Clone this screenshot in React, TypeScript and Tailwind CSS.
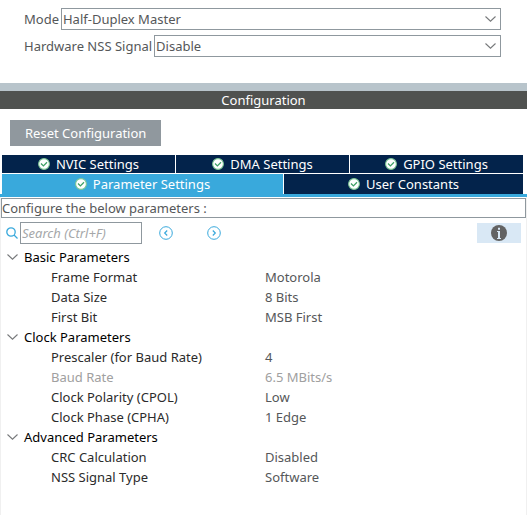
import { useState } from "react";

type Param = { name: string; value: string; disabled?: boolean };
type Group = { title: string; params: Param[] };

const groups: Group[] = [
  {
    title: "Basic Parameters",
    params: [
      { name: "Frame Format", value: "Motorola" },
      { name: "Data Size", value: "8 Bits" },
      { name: "First Bit", value: "MSB First" },
    ],
  },
  {
    title: "Clock Parameters",
    params: [
      { name: "Prescaler (for Baud Rate)", value: "4" },
      { name: "Baud Rate", value: "6.5 MBits/s", disabled: true },
      { name: "Clock Polarity (CPOL)", value: "Low" },
      { name: "Clock Phase (CPHA)", value: "1 Edge" },
    ],
  },
  {
    title: "Advanced Parameters",
    params: [
      { name: "CRC Calculation", value: "Disabled" },
      { name: "NSS Signal Type", value: "Software" },
    ],
  },
];

function Chevron() {
  return (
    <svg width="11" height="6" viewBox="0 0 11 6" fill="none" stroke="#77797b" strokeWidth="1.1" aria-hidden="true">
      <path d="M0.5 0.5 5.5 5.2 10.5 0.5" />
    </svg>
  );
}

function CheckBadge() {
  return (
    <svg width="12" height="12" viewBox="0 0 12 12" fill="none" aria-hidden="true">
      <circle cx="6" cy="6" r="5.4" fill="#fff" stroke="#7cc795" strokeWidth="1.1" />
      <path d="M3 5.5 5.4 7.9 9 4.3" stroke="#3fa166" strokeWidth="1.3" />
    </svg>
  );
}

function SelectField({ id, label, options }: { id: string; label: string; options: string[] }) {
  return (
    <div className="flex h-[22px] items-center gap-0.5">
      <label htmlFor={id} className="shrink-0">{label}</label>
      <div className="grid h-full flex-1 items-center">
        <select
          id={id}
          className="col-start-1 row-start-1 h-full w-full appearance-none border border-[#8f989e] bg-white pl-px pr-5 text-[#555759] outline-none"
        >
          {options.map((o) => (
            <option key={o}>{o}</option>
          ))}
        </select>
        <span className="pointer-events-none col-start-1 row-start-1 mr-[5px] justify-self-end">
          <Chevron />
        </span>
      </div>
    </div>
  );
}

function Tab({ label, active, onSelect }: { label: string; active: boolean; onSelect: (l: string) => void }) {
  return (
    <button
      role="tab"
      aria-selected={active}
      onClick={() => onSelect(label)}
      className={`flex items-center justify-center gap-[6px] text-white ${active ? "bg-[#39a9dc]" : "bg-[#03234b]"}`}
    >
      <CheckBadge />
      {label}
    </button>
  );
}

function StepButton({ label, path }: { label: string; path: string }) {
  return (
    <button aria-label={label}>
      <svg width="14" height="14" viewBox="0 0 14 14" fill="none" stroke="#39a9dc" aria-hidden="true">
        <circle cx="7" cy="7" r="6.3" strokeWidth="1" />
        <path d={path} strokeWidth="1.2" />
      </svg>
    </button>
  );
}

export default function App() {
  const [tab, setTab] = useState("Parameter Settings");
  const [closed, setClosed] = useState<string[]>([]);
  const toggle = (t: string) =>
    setClosed((c) => (c.includes(t) ? c.filter((x) => x !== t) : [...c, t]));

  return (
    <div className="flex min-h-screen flex-col bg-white font-['Noto_Sans',sans-serif] text-[13px] leading-[18px] text-[#555759]">
      <section className="flex flex-col gap-[5px] pt-2 pr-[26px] pb-[26px] pl-6">
        <SelectField id="mode" label="Mode" options={["Half-Duplex Master", "Disable"]} />
        <SelectField id="nss" label="Hardware NSS Signal" options={["Disable"]} />
      </section>

      <h2 className="border-t-8 border-[#b8c4cb] bg-[#505250] text-center text-white">Configuration</h2>

      <div className="px-[10px] pt-[11px] pb-[9px]">
        <button className="block h-[26px] bg-[#90989e] px-[15px] text-white">Reset Configuration</button>
      </div>

      <div role="tablist" className="flex flex-col gap-px border-b-3 border-[#39a9dc] pr-1 pl-0.5">
        <div className="grid h-[18px] grid-cols-3 gap-px">
          {["NVIC Settings", "DMA Settings", "GPIO Settings"].map((t) => (
            <Tab key={t} label={t} active={tab === t} onSelect={setTab} />
          ))}
        </div>
        <div className="grid h-5 grid-cols-[281fr_239fr] gap-px">
          {["Parameter Settings", "User Constants"].map((t) => (
            <Tab key={t} label={t} active={tab === t} onSelect={setTab} />
          ))}
        </div>
      </div>

      <main className="flex-1 border-x border-[#f0f0f0] pt-px">
        <p className="h-5 border border-[#8f989e]">Configure the below parameters :</p>

        <div className="mt-1 flex h-[22px] items-center pr-[5px] pl-[5px]">
          <label htmlFor="search" aria-label="Search" className="mr-0.5">
            <svg width="12" height="12" viewBox="0 0 12 12" fill="none" stroke="#39a9dc" strokeWidth="1.3" aria-hidden="true">
              <circle cx="5" cy="5" r="4.2" />
              <path d="M8 8 11.5 11.5" />
            </svg>
          </label>
          <input
            id="search"
            type="text"
            placeholder="Search (Ctrl+F)"
            className="h-full w-[122px] border border-[#8f989e] px-px outline-none placeholder:text-[#a5a7a9] placeholder:italic"
          />
          <div className="ml-[17px] flex flex-1 gap-[34px]">
            <StepButton label="Previous match" path="M8.2 4.5 5.7 7 8.2 9.5" />
            <StepButton label="Next match" path="M5.8 4.5 8.3 7 5.8 9.5" />
          </div>
          <button aria-label="Information" className="flex h-5 w-11 items-center justify-center bg-[#d9e8f5]">
            <svg width="16" height="16" viewBox="0 0 16 16" aria-hidden="true">
              <circle cx="8" cy="8" r="8" fill="#636363" />
              <path d="M7 2.8h2v2H7zM6 6h3v7h1v1H6v-1h1V7H6z" fill="#d9e8f5" />
            </svg>
          </button>
        </div>

        <table className="mt-[3px] w-full table-fixed border-collapse text-left">
          <colgroup>
            <col className="w-[264px]" />
            <col />
          </colgroup>
          {groups.map((g) => (
            <tbody key={g.title}>
              <tr className="h-5">
                <th colSpan={2} className="p-0 font-normal text-black">
                  <button
                    aria-expanded={!closed.includes(g.title)}
                    onClick={() => toggle(g.title)}
                    className="flex h-5 items-center gap-[6px] pl-[6px]"
                  >
                    <Chevron />
                    {g.title}
                  </button>
                </th>
              </tr>
              {!closed.includes(g.title) &&
                g.params.map((p) => (
                  <tr key={p.name} className={`h-5 ${p.disabled ? "text-[#a0a0a0]" : ""}`}>
                    <th scope="row" className={`p-0 pl-[50px] font-normal ${p.disabled ? "" : "text-[#2b2b2b]"}`}>
                      {p.name}
                    </th>
                    <td className="p-0">{p.value}</td>
                  </tr>
                ))}
            </tbody>
          ))}
        </table>
      </main>
    </div>
  );
}
